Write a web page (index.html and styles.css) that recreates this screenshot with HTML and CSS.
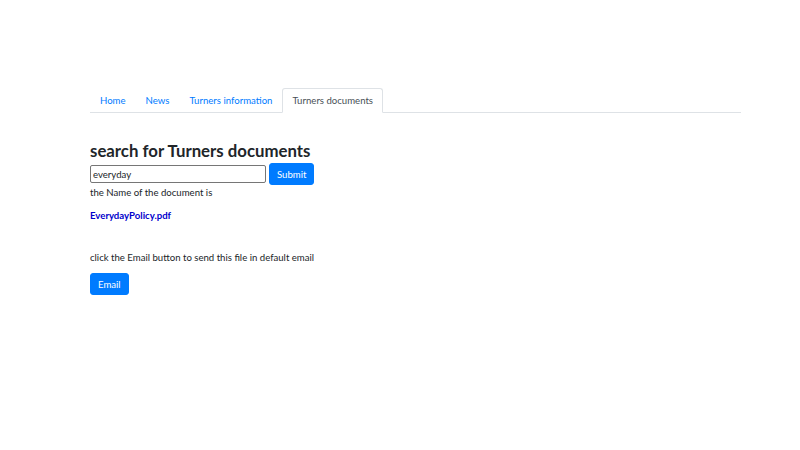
FILE: index.html
```html
<!DOCTYPE html>
<html>
<head>
<meta charset="utf-8">
<link rel="stylesheet" href="styles.css">
</head>
<body>
<div class="container">
  <ul class="tabs">
    <li><a class="tab" href="#">Home</a></li>
    <li><a class="tab" href="#">News</a></li>
    <li><a class="tab" href="#">Turners information</a></li>
    <li><a class="tab active" href="#">Turners documents</a></li>
  </ul>
  <h2 class="title">search for Turners documents</h2>
  <form class="search">
    <input class="field" type="text" value="everyday">
    <button class="btn" type="button">Submit</button>
  </form>
  <p class="text">the Name of the document is</p>
  <p class="doc"><a href="#">EverydayPolicy.pdf</a></p>
  <p class="text hint">click the Email button to send this file in default email</p>
  <button class="btn email" type="button">Email</button>
</div>
</body>
</html>
```
FILE: styles.css
```css
* { box-sizing: border-box; }
body {
  margin: 0;
  font-family: Lato, "Open Sans", sans-serif;
  font-size: 9.6px;
  color: #212529;
  background: #fff;
}
.container {
  width: 651px;
  margin: 0 0 0 90px;
  padding-top: 88px;
}
.tabs {
  list-style: none;
  margin: 0;
  padding: 0;
  display: flex;
  border-bottom: 1px solid #dee2e6;
}
.tabs li { margin-bottom: -1px; }
.tab {
  display: block;
  height: 25px;
  line-height: 23px;
  padding: 0 9px;
  border: 1px solid transparent;
  border-radius: 3px 3px 0 0;
  color: #007bff;
  text-decoration: none;
}
.tab.active {
  color: #495057;
  border-color: #dee2e6 #dee2e6 #fff;
  background: #fff;
}
.title {
  margin: 27px 0 0;
  font-size: 16.8px;
  font-weight: 700;
  line-height: 22px;
  color: #212529;
}
.search {
  display: flex;
  align-items: center;
  gap: 3px;
  margin-top: 1px;
}
.field {
  width: 176px;
  height: 18px;
  border: 1px solid #767676;
  border-radius: 2px;
  padding: 0 2px;
  font-family: inherit;
  font-size: 9.6px;
  color: #212529;
}
.btn {
  background: #007bff;
  color: #fff;
  border: 1px solid #007bff;
  border-radius: 3px;
  height: 22px;
  padding: 0 7px;
  font-family: inherit;
  font-size: 9.6px;
}
.text { margin: 0; line-height: 16px; }
.doc { margin: 7px 0 0; line-height: 16px; font-weight: 700; }
.doc a { color: #0000cc; text-decoration: none; }
.hint { margin-top: 26px; }
.email { margin-top: 7px; }
```
